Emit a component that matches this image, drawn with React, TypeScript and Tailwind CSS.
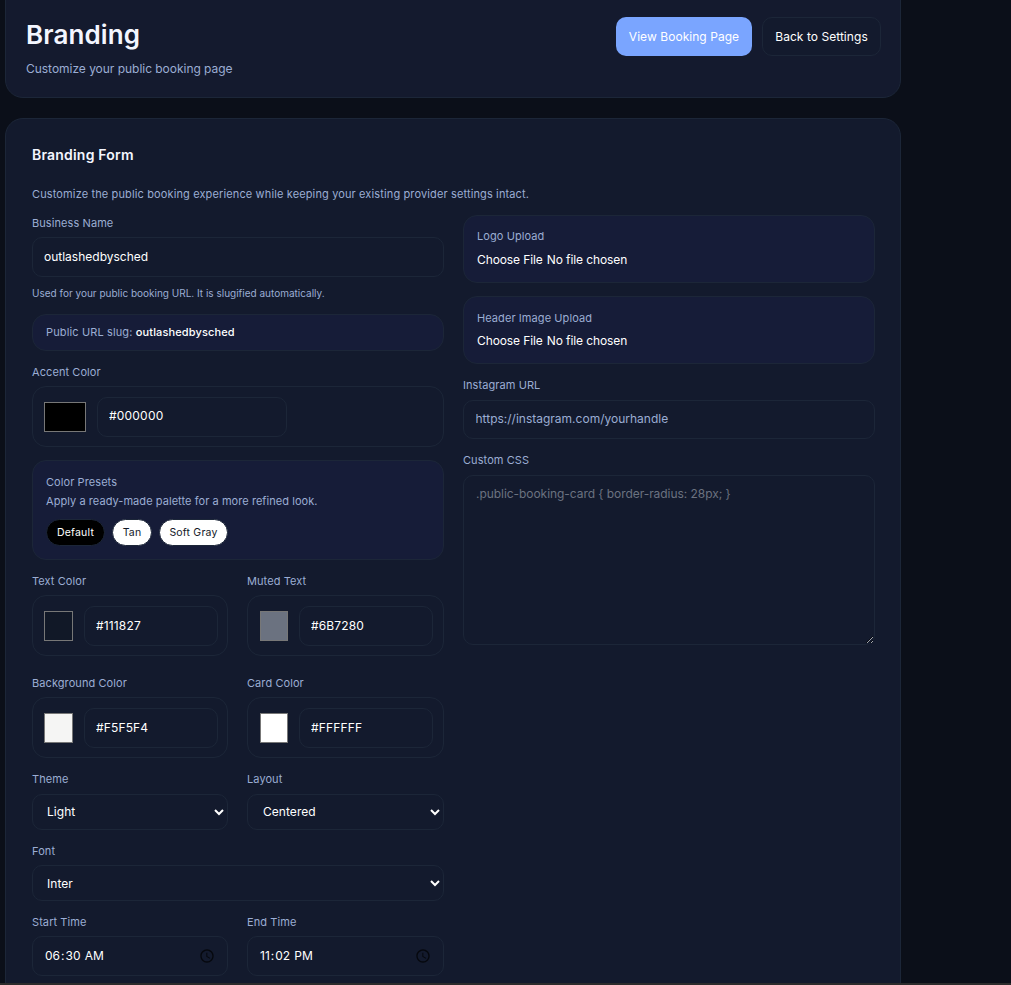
function Label({ children }: { children: React.ReactNode }) {
  return <label className="block text-[11px] leading-[14px] tracking-[0.08px] text-[#9badd3]">{children}</label>;
}

function ColorField({ label, value, right }: { label: string; value: string; right?: boolean }) {
  return (
    <div className="flex flex-col gap-[7px]">
      <Label>{label}</Label>
      <div className={`flex h-[61px] items-center gap-[11px] rounded-[14px] border border-[#1c2638] ${right ? "pl-[12px]" : "pl-[11px]"}`}>
        <input
          type="color"
          defaultValue={value}
          className={`h-[30px] shrink-0 cursor-pointer bg-transparent p-0 [&::-webkit-color-swatch-wrapper]:p-0 ${right ? "w-[28px]" : "w-[29px]"}`}
        />
        <input
          type="text"
          defaultValue={value.toUpperCase()}
          className="h-[40px] w-[134px] rounded-[10px] border border-[#1c2638] bg-[#131a2d] px-[11px] pb-[1px] text-[12px] tracking-[0.15px] text-white outline-none"
        />
      </div>
    </div>
  );
}

function AccentField() {
  return (
    <div className="flex flex-col gap-[7px]">
      <Label>Accent Color</Label>
      <div className="flex h-[61px] items-center gap-[11px] rounded-[14px] border border-[#1c2638] pl-[11px]">
        <input
          type="color"
          defaultValue="#000000"
          className="h-[30px] w-[42px] shrink-0 cursor-pointer bg-transparent p-0 [&::-webkit-color-swatch-wrapper]:p-0"
        />
        <input
          type="text"
          defaultValue="#000000"
          className="h-[40px] w-[190px] rounded-[10px] border border-[#1c2638] bg-[#131a2d] px-[11px] pb-[2px] text-[12px] tracking-[0.2px] text-white outline-none"
        />
      </div>
    </div>
  );
}

function SelectField({ label, value, roomy, inset }: { label: string; value: string; roomy?: boolean; inset?: boolean }) {
  return (
    <div className={`flex flex-col ${roomy ? "gap-[8px]" : "gap-[7px]"}`}>
      <Label>{label}</Label>
      <select
        defaultValue={value}
        className={`h-[36px] w-full rounded-[10px] border border-[#1c2638] bg-[#131a2d] pr-[10px] text-[12px] tracking-[0.05px] text-white outline-none [color-scheme:dark] ${roomy ? "pb-[2px]" : ""} ${inset ? "pl-[11px]" : "pl-[10px]"}`}
      >
        <option>{value}</option>
      </select>
    </div>
  );
}

function TimeField({ label, value }: { label: string; value: string }) {
  return (
    <div className="flex flex-col gap-[7px]">
      <Label>{label}</Label>
      <input
        type="time"
        defaultValue={value}
        className="h-[40px] w-full rounded-[10px] border border-[#1c2638] bg-[#131a2d] pl-[11px] pr-[12px] text-[12px] text-white outline-none [&::-webkit-calendar-picker-indicator]:h-[16px] [&::-webkit-calendar-picker-indicator]:w-[16px] [&::-webkit-calendar-picker-indicator]:p-0 [&::-webkit-calendar-picker-indicator]:opacity-70"
      />
    </div>
  );
}

function UploadBox({ label, low }: { label: string; low?: boolean }) {
  return (
    <div className={`flex h-[68px] flex-col rounded-[14px] border border-[#1c2638] bg-[#161c38] px-[13px] ${low ? "gap-[7px] pt-[14px]" : "gap-[8px] pt-[13px]"}`}>
      <Label>{label}</Label>
      <input type="file" className="block w-full text-[12px] tracking-[-0.1px] text-white" />
    </div>
  );
}

export default function App() {
  return (
    <div
      className="h-[985px] w-[1011px] overflow-hidden border-b-2 border-[#2c2c2c] bg-[#0b0f19] pl-[5px] text-white"
      style={{ fontFamily: "Inter, 'Liberation Sans', sans-serif" }}
    >
      <div className="w-[896px]">
        <header className="-mt-[20px] flex h-[118px] items-start justify-between rounded-[18px] border border-[#1c2638] bg-[#141a2e] pl-[20px] pr-[19px] pt-[36px]">
          <div>
            <h1 className="mt-[1px] text-[26px] font-semibold leading-[34px] tracking-[0.1px] text-[#f3f6ff]">Branding</h1>
            <p className="mt-[9px] text-[12px] leading-[16px] tracking-[-0.03px] text-[#9badd3]">Customize your public booking page</p>
          </div>
          <div className="flex gap-[10px]">
            <button className="h-[39px] w-[136px] rounded-[10px] bg-[#7aa5ff] text-[12px] tracking-[0.05px] text-white">View Booking Page</button>
            <button className="h-[39px] w-[119px] rounded-[10px] border border-[#1c2638] bg-[#131a2d] text-[12px] tracking-[0.05px] text-white">Back to Settings</button>
          </div>
        </header>

        <section className="mt-[20px] h-[900px] rounded-[18px] border border-[#1c2638] bg-[#131a2d] px-[26px] pt-[27px]">
          <h2 className="text-[14px] font-semibold leading-[18px] tracking-[0.2px] text-[#f3f6ff]">Branding Form</h2>
          <p className="mt-[23px] text-[11px] leading-[14px] tracking-[0.13px] text-[#9badd3]">
            Customize the public booking experience while keeping your existing provider settings intact.
          </p>

          <div className="mt-[15px] grid w-[843px] grid-cols-[412px_412px] gap-[19px]">
            <div className="flex flex-col">
              <div className="flex flex-col gap-[7px]">
                <Label>Business Name</Label>
                <input
                  type="text"
                  defaultValue="outlashedbysched"
                  className="h-[40px] w-full rounded-[10px] border border-[#1c2638] bg-[#131a2d] px-[11px] pb-[1px] text-[12px] text-white outline-none"
                />
              </div>
              <p className="mt-[9px] text-[10px] leading-[14px] text-[#9badd3]">Used for your public booking URL. It is slugified automatically.</p>
              <div className="mt-[14px] flex h-[37px] items-center rounded-[14px] border border-[#1c2638] bg-[#161c38] px-[13px] text-[11px] tracking-[0.13px] text-[#9badd3]">
                <span>Public URL slug:&nbsp;</span>
                <strong className="font-medium text-white">outlashedbysched</strong>
              </div>

              <div className="mt-[14px]">
                <AccentField />
              </div>

              <div className="mt-[13px] h-[100px] rounded-[14px] border border-[#1c2638] bg-[#161c38] px-[13px] pt-[14px]">
                <div className="text-[11px] leading-[14px] tracking-[0.08px] text-[#9badd3]">Color Presets</div>
                <div className="mt-[5px] text-[11px] leading-[14px] tracking-[0.06px] text-[#9badd3]">Apply a ready-made palette for a more refined look.</div>
                <div className="mt-[11px] flex gap-[7px]">
                  <button className="h-[27px] w-[59px] rounded-full border border-[#1c2638] bg-black text-[10.5px] tracking-[0.2px] text-white">Default</button>
                  <button className="h-[27px] w-[40px] rounded-full border border-[#1c2638] bg-white text-[10.5px] tracking-[0.2px] text-[#111827]">Tan</button>
                  <button className="h-[27px] w-[69px] rounded-full border border-[#1c2638] bg-white text-[10.5px] tracking-[0.2px] text-[#111827]">Soft Gray</button>
                </div>
              </div>

              <div className="mt-[14px] grid grid-cols-[196px_197px] gap-x-[19px] gap-y-[20px]">
                <ColorField label="Text Color" value="#111827" />
                <ColorField label="Muted Text" value="#6b7280" right />
                <ColorField label="Background Color" value="#f5f5f4" />
                <ColorField label="Card Color" value="#ffffff" right />
              </div>

              <div className="mt-[14px] grid grid-cols-[196px_197px] gap-x-[19px] gap-y-[14px]">
                <SelectField label="Theme" value="Light" roomy />
                <SelectField label="Layout" value="Centered" roomy inset />
                <div className="col-span-2">
                  <SelectField label="Font" value="Inter" />
                </div>
                <TimeField label="Start Time" value="06:30" />
                <TimeField label="End Time" value="23:02" />
              </div>
            </div>

            <div className="-mt-[1px] flex flex-col">
              <UploadBox label="Logo Upload" />
              <div className="mt-[13px]">
                <UploadBox label="Header Image Upload" low />
              </div>
              <div className="mt-[14px] flex flex-col gap-[8px]">
                <Label>Instagram URL</Label>
                <input
                  type="text"
                  defaultValue="https://instagram.com/yourhandle"
                  className="h-[39px] w-full rounded-[10px] border border-[#1c2638] bg-[#131a2d] px-[11.5px] pb-[2px] text-[12px] text-[#9badd3] outline-none"
                />
              </div>
              <div className="mt-[14px] flex flex-col gap-[8px]">
                <Label>Custom CSS</Label>
                <textarea
                  placeholder=".public-booking-card { border-radius: 28px; }"
                  className="block h-[170px] w-full rounded-[10px] border border-[#1c2638] bg-[#131a2d] px-[12px] py-[9px] text-[12px] tracking-[-0.05px] text-white outline-none placeholder:text-[#6b7280] [color-scheme:dark]"
                />
              </div>
            </div>
          </div>
        </section>
      </div>
    </div>
  );
}
